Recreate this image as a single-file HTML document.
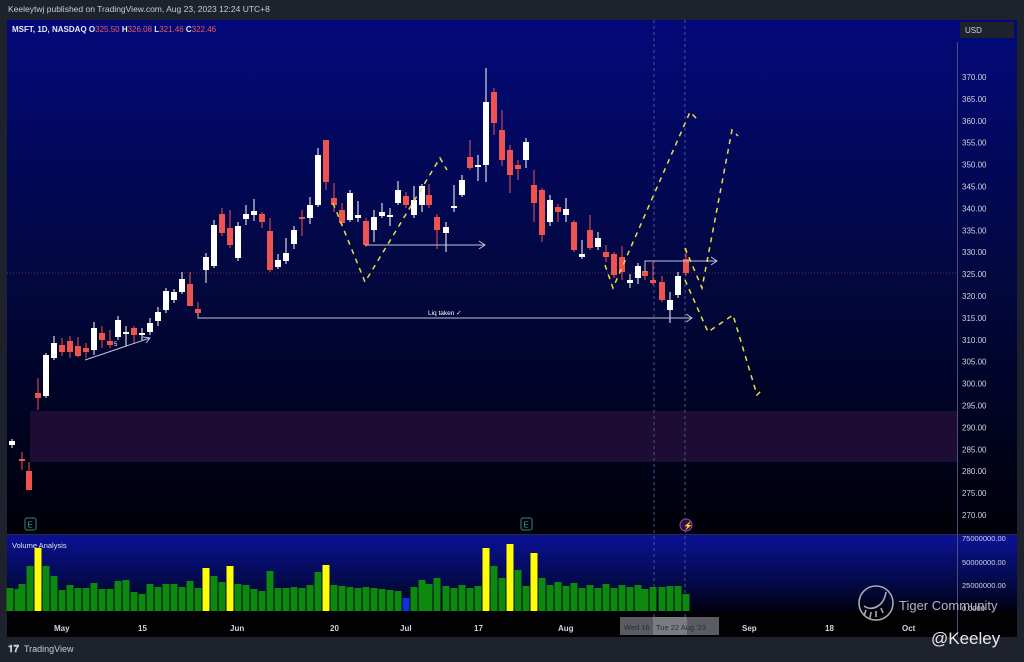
<!DOCTYPE html>
<html><head><meta charset="utf-8"><style>
html,body{margin:0;padding:0;background:#1e222d;width:1024px;height:662px;overflow:hidden;font-family:"Liberation Sans",sans-serif}
svg{position:absolute;left:0;top:0}
</style></head><body>
<svg id="s" width="1024" height="662" xmlns="http://www.w3.org/2000/svg" font-family="Liberation Sans, sans-serif">
<defs>
<linearGradient id="g1" x1="0" y1="0" x2="0" y2="1">
<stop offset="0" stop-color="#03097a"/><stop offset="0.45" stop-color="#020845"/><stop offset="1" stop-color="#000008"/></linearGradient>
<linearGradient id="g2" x1="0" y1="0" x2="0" y2="1">
<stop offset="0" stop-color="#0a1196"/><stop offset="0.6" stop-color="#030a4a"/><stop offset="1" stop-color="#00000a"/></linearGradient>
</defs>
<rect x="0" y="0" width="1024" height="662" fill="#1e222d"/>
<text x="8" y="12" font-size="8.5" fill="#c9ccd4">Keeleytwj published on TradingView.com, Aug 23, 2023 12:24 UTC+8</text>
<rect x="7" y="20" width="1010" height="514" fill="url(#g1)"/>
<rect x="7" y="535" width="1010" height="78" fill="url(#g2)"/>
<rect x="7" y="613" width="1010" height="24" fill="#020205"/>
<line x1="7" y1="534.5" x2="1017" y2="534.5" stroke="#2a2e39"/>
<line x1="957.5" y1="42" x2="957.5" y2="637" stroke="#4a5078" stroke-width="1"/>
<rect x="960" y="22" width="54" height="16" rx="2" fill="#1e222d"/>
<text x="965" y="33" font-size="8" fill="#d1d4dc">USD</text>
<!-- zone -->
<rect x="30" y="411" width="927" height="51" fill="#1d0c33"/>
<line x1="7" y1="273" x2="957" y2="273" stroke="#8a3a4a" stroke-width="0.8" stroke-dasharray="1,2"/>
<line x1="654" y1="20" x2="654" y2="637" stroke="#4a5590" stroke-dasharray="3,3"/>
<line x1="685" y1="20" x2="685" y2="637" stroke="#4a5590" stroke-dasharray="3,3"/>
<g id="c"></g>
<g id="v"></g>
<!-- white arrows -->
<g stroke="#c0c4d8" stroke-width="1" fill="none">
<path d="M198 313V318H692M686 314L692 318L686 322"/>
<path d="M365 245H485M479 241L485 245L479 249"/>
<path d="M645 272V261H717M711 257L717 261L711 265"/>
<path d="M85 360L150 338M143 337L150 338L146 343"/>
</g>
<text x="428" y="315" font-size="6.5" fill="#ffffff">Liq taken ✓</text>
<text x="114" y="346" font-size="6" fill="#fff">5</text>
<!-- yellow dashed -->
<g stroke="#e8e040" stroke-width="1.5" fill="none" stroke-dasharray="5,5">
<path d="M333 203L365 282L440 158L447 170"/>
<path d="M605 265L613 288L690 112L697 119"/>
<path d="M685 248L702 288L732 130L738 136"/>
<path d="M685 280L708 332L733 315L757 395L762 390"/>
</g>
<!-- price labels -->
<g font-size="8" fill="#d1d4dc" id="pl"></g>
<text x="962" y="541" font-size="7.5" fill="#d1d4dc">75000000.00</text>
<text x="962" y="565" font-size="7.5" fill="#d1d4dc">50000000.00</text>
<text x="962" y="588" font-size="7.5" fill="#d1d4dc">25000000.00</text>
<text x="962" y="611" font-size="7.5" fill="#d1d4dc">0.0000</text>
<text x="12" y="548" font-size="7.5" fill="#e0e3ea">Volume Analysis</text>
<!-- legend -->
<text x="12" y="32" font-size="8" font-weight="bold" fill="#e8eaf0">MSFT, 1D, NASDAQ <tspan>O</tspan><tspan fill="#f05a5a" font-weight="normal">325.50</tspan> H<tspan fill="#f05a5a" font-weight="normal">326.08</tspan> L<tspan fill="#f05a5a" font-weight="normal">321.46</tspan> C<tspan fill="#f05a5a" font-weight="normal">322.46</tspan></text>
<!-- E icons -->
<g fill="none" stroke="#2f8a7a"><rect x="25" y="518" width="11" height="12" rx="2"/><rect x="521" y="518" width="11" height="12" rx="2"/></g>
<text x="27.5" y="527.5" font-size="8" fill="#3aa08e">E</text>
<text x="523.5" y="527.5" font-size="8" fill="#3aa08e">E</text>
<circle cx="686" cy="525" r="6" fill="#2a1040" stroke="#9a4ab0"/>
<text x="683" y="528.5" font-size="8" fill="#c070e0">⚡</text>
<!-- time axis -->
<g font-size="8" font-weight="bold" fill="#d1d4dc">
<text x="54" y="631">May</text><text x="138" y="631">15</text><text x="230" y="631">Jun</text><text x="330" y="631">20</text><text x="400" y="631">Jul</text><text x="474" y="631">17</text><text x="558" y="631">Aug</text><text x="742" y="631">Sep</text><text x="825" y="631">18</text><text x="902" y="631">Oct</text>
</g>
<rect x="620" y="617" width="99" height="18" fill="#5a5c62"/>
<rect x="653" y="617" width="34" height="18" fill="#7a7c82"/>
<text x="624" y="630" font-size="7.5" fill="#2a2c30">Wed 16 </text>
<text x="656" y="630" font-size="7.5" fill="#2a2c30">Tue 22 Aug '23</text>
<!-- watermark -->
<g stroke="#c8c8cc" stroke-width="1.6" fill="none" opacity="0.85">
<circle cx="876" cy="603" r="17"/>
<path d="M864 606C872 612 884 606 886 592"/>
<path d="M866 610L864 616M871 612L870 618M876 611L876 617M881 608L883 613"/>
</g>
<text x="899" y="610" font-size="13" fill="#c8c8cc" opacity="0.9">Tiger Community</text>
<text x="931" y="644" font-size="17" fill="#e8e8ec">@Keeley</text>
<!-- TV logo -->
<text x="8" y="652" font-size="10" font-weight="bold" fill="#c9ccd4">𝟏𝟕</text>
<text x="24" y="652" font-size="9" fill="#c9ccd4">TradingView</text>
</svg>
<script>
var NS="http://www.w3.org/2000/svg";
function el(p,t,a){var e=document.createElementNS(NS,t);for(var k in a)e.setAttribute(k,a[k]);p.appendChild(e);return e;}
var pl=document.getElementById("pl");
for(var p=370;p>=270;p-=5){var y=77+(370-p)*4.38;var t=el(pl,"text",{x:962,y:(y+3).toFixed(1)});t.textContent=p.toFixed(2);}
// candles: x, top, bottom, color(w/r), wickTop, wickBot
var C=[[12,441,445,'w',439,448],[22,459,461,'r',452,470],[29,471,490,'r',462,490],[38,393,398,'r',378,410],[46,355,396,'w',353,398],[54,343,358,'w',336,360],[62,345,352,'r',338,356],[70,341,352,'r',336,358],[78,346,356,'r',337,357],[86,348,352,'r',343,358],[94,328,350,'w',322,355],[102,333,340,'r',326,348],[110,341,345,'r',330,348],[118,320,337,'w',316,340],[126,332,334,'w',326,346],[134,328,335,'r',326,344],[142,333,335,'w',328,340],[150,323,332,'w',318,335],[158,312,321,'w',307,326],[166,291,310,'w',288,313],[174,292,300,'w',289,303],[182,279,292,'w',272,294],[190,284,306,'r',272,306],[198,309,313,'r',302,315],[206,257,270,'w',253,283],[214,225,266,'w',220,268],[222,214,233,'r',208,236],[230,228,245,'r',210,248],[238,226,258,'w',222,261],[246,214,219,'w',205,225],[254,211,215,'w',199,221],[262,214,222,'r',212,228],[270,231,270,'r',218,272],[278,260,267,'w',254,269],[286,253,261,'w',238,264],[294,230,244,'w',226,249],[302,217,219,'r',210,236],[310,205,218,'w',197,224],[318,155,205,'w',148,207],[326,140,182,'r',140,190],[334,198,205,'r',183,212],[342,210,223,'r',203,225],[350,193,220,'w',190,222],[358,215,218,'w',201,222],[366,221,245,'r',218,247],[374,217,230,'w',210,242],[382,212,216,'w',203,218],[390,215,217,'w',208,226],[398,190,203,'w',181,205],[406,196,205,'r',192,208],[414,200,215,'w',186,218],[422,186,205,'w',184,212],[429,195,205,'r',184,208],[437,217,230,'r',214,249],[446,227,233,'w',222,252],[454,206,208,'w',185,212],[462,180,195,'w',175,197],[470,157,168,'r',140,170],[478,165,167,'w',155,181],[486,102,165,'w',68,182],[494,92,123,'r',88,135],[502,130,160,'r',110,166],[510,150,175,'r',145,193],[518,165,169,'r',160,180],[526,142,160,'w',138,168],[534,185,203,'r',170,222],[542,190,235,'r',188,242],[550,200,222,'w',195,226],[558,207,212,'r',204,222],[566,209,215,'w',198,222],[574,222,250,'r',220,252],[582,254,257,'w',240,259],[590,230,248,'r',215,250],[598,238,247,'w',232,250],[606,252,257,'r',245,262],[614,254,275,'r',252,278],[622,257,272,'r',246,280],[630,280,283,'w',274,288],[638,266,278,'w',263,284],[645,271,276,'r',263,280],[653,280,283,'r',262,285],[662,282,300,'r',276,302],[670,300,310,'w',292,323],[678,276,295,'w',272,298],[686,259,273,'r',248,276]];
var cg=document.getElementById("c");
C.forEach(function(c){var col=c[3]=='w'?'#ffffff':'#ef5350';
el(cg,"line",{x1:c[0],x2:c[0],y1:c[4],y2:c[5],stroke:col,"stroke-width":1});
el(cg,"rect",{x:c[0]-3,y:c[1],width:6,height:Math.max(1.5,c[2]-c[1]),fill:col});});
var V=[[10,588],[18,589],[22,584],[30,566],[38,548,'y'],[46,566],[54,576],[62,590],[70,585],[78,588],[86,588],[94,583],[102,589],[110,589],[118,581],[126,580],[134,592],[142,594],[150,584],[158,587],[166,584],[174,584],[182,587],[190,581],[198,588],[206,568,'y'],[214,576],[222,582],[230,566,'y'],[238,584],[246,585],[254,589],[262,591],[270,571],[278,588],[286,588],[294,587],[302,588],[310,585],[318,572],[326,565,'y'],[334,585],[342,586],[350,587],[358,588],[366,587],[374,588],[382,589],[390,590],[398,591],[406,598,'b'],[414,587],[422,580],[429,584],[437,578],[446,586],[454,588],[462,585],[470,588],[478,586],[486,548,'y'],[494,566],[502,578],[510,544,'y'],[518,570],[526,586],[534,553,'y'],[542,578],[550,585],[558,582],[566,586],[574,583],[582,588],[590,585],[598,588],[606,584],[614,588],[622,585],[630,587],[638,585],[645,589],[653,587],[662,587],[670,586],[678,586],[686,594]];
var vg=document.getElementById("v");
V.forEach(function(v){var col=v[2]=='y'?'#ffff00':v[2]=='b'?'#1030e0':'#0d8a0d';
el(vg,"rect",{x:v[0]-3.5,y:v[1],width:7,height:611-v[1],fill:col});});
</script>
</body></html>
